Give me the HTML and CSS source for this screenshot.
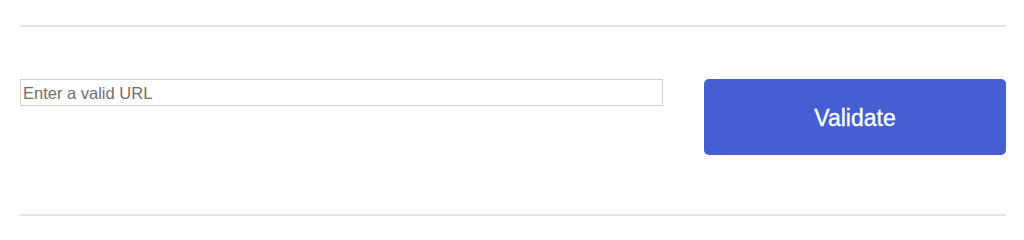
FILE: index.html
```html
<!DOCTYPE html>
<html lang="en">
<head>
<meta charset="utf-8">
<title>Validate URL</title>
<link rel="stylesheet" href="styles.css">
</head>
<body>
<div class="page">
  <div class="panel">
    <form class="row" onsubmit="return false;">
      <input class="url" type="text" placeholder="Enter a valid URL">
      <button class="validate" type="submit">Validate</button>
    </form>
  </div>
</div>
</body>
</html>
```

FILE: styles.css
```css
html, body {
  margin: 0;
  padding: 0;
  background: #ffffff;
}
.page {
  padding: 25px 18px 0 20px;
  font-family: "Liberation Sans", Arial, sans-serif;
}
.panel {
  border-top: 2px solid #e2e2e2;
  border-bottom: 2px solid #e2e2e2;
  padding: 52px 0 59px 0;
}
.row {
  display: flex;
  align-items: flex-start;
  justify-content: space-between;
  margin: 0;
}
.url {
  box-sizing: border-box;
  width: 643px;
  height: 27px;
  margin: 0;
  padding: 2px 2px 0 2px;
  border: 1px solid #cfcfcf;
  font-family: "Liberation Sans", Arial, sans-serif;
  font-size: 16.5px;
  color: #333;
  outline: none;
}
.url::placeholder {
  color: #6e6e6e;
}
.validate {
  box-sizing: border-box;
  width: 302px;
  height: 76px;
  margin: 0;
  padding: 3px 0 0 0;
  border: none;
  border-radius: 5px;
  background: #455fd2;
  color: #ffffff;
  font-family: "Liberation Sans", Arial, sans-serif;
  font-size: 23px;
  -webkit-text-stroke: 0.3px #ffffff;
  cursor: pointer;
}
```
